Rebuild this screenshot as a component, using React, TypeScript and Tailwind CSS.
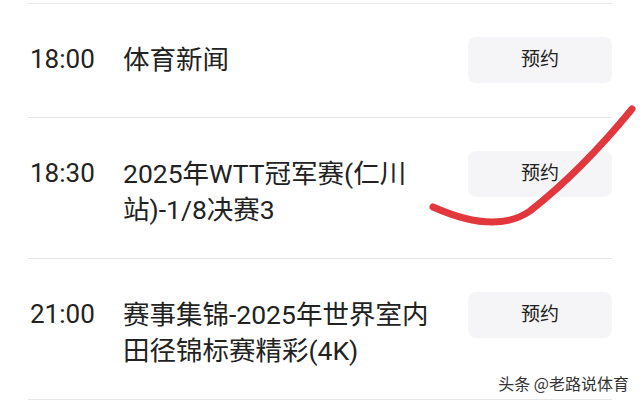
import React from "react";

const rows = [
  { time: "18:00", lines: ["体育新闻"], h: "min-h-[114px]" },
  { time: "18:30", lines: ["2025年WTT冠军赛(仁川", "站)-1/8决赛3"], h: "min-h-[140px]" },
  { time: "21:00", lines: ["赛事集锦-2025年世界室内", "田径锦标赛精彩(4K)"], h: "min-h-[140px]" },
];

export default function App() {
  return (
    <div
      className="relative w-[640px] h-[404px] bg-white overflow-hidden text-[#222222]"
      style={{ fontFamily: "Roboto, 'Noto Sans CJK SC', sans-serif" }}
    >
      <div className="mx-[28px] mt-[3px] border-t border-[#e8e8e8]">
        {rows.map((r) => (
          <div
            key={r.time}
            className={`flex items-start border-b border-[#e8e8e8] pt-[33px] pb-[31px] ${r.h}`}
          >
            <div className="w-[95px] pl-[2px] pt-[5px] text-[26px] leading-[35px]">{r.time}</div>
            <div className="flex-1 pt-[5px] text-[26.5px] leading-[35.5px]">
              {r.lines.map((l) => (
                <div key={l} className="whitespace-nowrap">
                  {l}
                </div>
              ))}
            </div>
            <button className="w-[144px] h-[46px] rounded-[8px] bg-[#f5f5f7] text-[19px] text-[#222222] flex items-center justify-center">
              预约
            </button>
          </div>
        ))}
      </div>

      <svg className="absolute left-0 top-0 pointer-events-none" width="640" height="404" viewBox="0 0 640 404">
        <path
          d="M433 207 C 460 219, 500 232, 530 211 C 562 186, 600 148, 632 109"
          fill="none"
          stroke="#e2383d"
          strokeWidth="7"
          strokeLinecap="round"
        />
      </svg>

      <div
        className="absolute right-[11px] top-[373px] text-[16px] leading-[20px] text-[#333333] whitespace-nowrap"
        style={{ fontFamily: "'Noto Sans CJK SC', sans-serif" }}
      >
        头条 @老路说体育
      </div>
    </div>
  );
}
